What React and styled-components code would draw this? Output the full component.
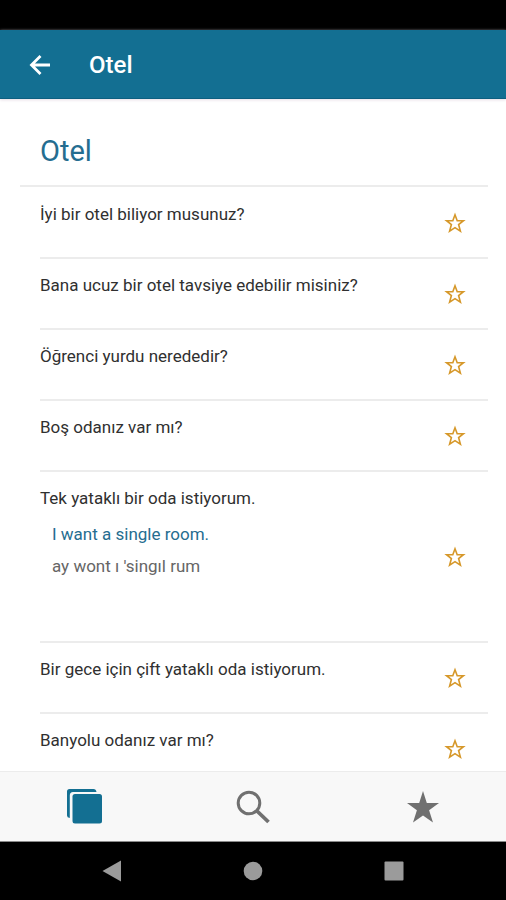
import React, { useState } from 'react';
import styled, { createGlobalStyle } from 'styled-components';

const GlobalStyle = createGlobalStyle`
  * {
    box-sizing: border-box;
  }

  body {
    margin: 0;
    font-family: Roboto, 'Noto Sans', sans-serif;
    background: #ffffff;
  }
`;

const Screen = styled.div`
  height: 100vh;
  display: flex;
  flex-direction: column;
`;

const StatusBar = styled.div`
  flex: none;
  height: 30px;
  background: #000000;
`;

const Header = styled.header`
  flex: none;
  height: 69px;
  padding: 2px 20px 0;
  display: flex;
  align-items: center;
  gap: 29px;
  color: #ffffff;
  background: #136f92;
  border-bottom: 1px solid #0d5f80;
  box-shadow: 0 1px 3px #e6dce4;
  z-index: 1;
`;

const IconButton = styled.button`
  flex: none;
  width: 40px;
  height: 40px;
  padding: 0;
  display: flex;
  align-items: center;
  justify-content: center;
  border: none;
  background: none;
  color: ${(props) => props.$color};
  cursor: pointer;
`;

const HeaderTitle = styled.h1`
  margin: 0;
  font-size: 24px;
  line-height: 32px;
  font-weight: 500;
`;

const Content = styled.main`
  flex: 1;
  min-height: 0;
  overflow: hidden;
  padding: 0 18px 0 20px;
`;

const SectionTitle = styled.h2`
  margin: 0;
  padding: 32px 20px 14px;
  font-size: 29px;
  line-height: 40px;
  font-weight: 400;
  color: #256d90;
  border-bottom: 2px solid #ececec;
`;

const List = styled.ul`
  margin: 0;
  padding: 1px 0 0 20px;
  list-style: none;
`;

const ListItem = styled.li`
  min-height: ${(props) => (props.$open ? '171px' : '71px')};
  padding-right: 13px;
  display: flex;
  align-items: center;
  justify-content: space-between;
  border-bottom: 2px solid #ececec;
`;

const Phrase = styled.div`
  align-self: flex-start;
  padding-top: 14px;
  font-size: 17px;
  line-height: 24px;
  color: #303030;
`;

const Detail = styled.div`
  padding: 8px 12px 0;
  line-height: 32px;
`;

const Translation = styled.div`
  color: #256d90;
`;

const Reading = styled.div`
  color: #666666;
`;

const TabBar = styled.nav`
  flex: none;
  height: 71px;
  display: grid;
  grid-template-columns: repeat(3, 1fr);
  place-items: center;
  background: #f8f8f8;
  border-top: 1px solid #ececec;
  border-bottom: 1px solid #8a8a8a;
`;

const SystemBar = styled.div`
  flex: none;
  height: 58px;
  padding: 0 92px;
  display: flex;
  align-items: center;
  justify-content: space-between;
  background: #000000;
`;

const BackArrow = () => (
  <svg width='22' height='22' viewBox='0 0 22 22' fill='none'>
    <path
      d='M11.5 2 L2.5 11 L11.5 20 M2.5 11 H21'
      stroke='currentColor'
      strokeWidth='2.8'
    />
  </svg>
);

const StarOutline = () => (
  <svg width='22' height='22' viewBox='0 0 22 22' fill='none'>
    <path
      d='M11 2.8 L13.2 8.7 H19.4 L14.6 12.5 L16.4 19.2 L11 15.6 L5.6 19.2 L7.4 12.5 L2.6 8.7 H8.8 Z'
      stroke='currentColor'
      strokeWidth='1.6'
    />
  </svg>
);

const StarFilled = () => (
  <svg width='36' height='34' viewBox='0 0 36 34'>
    <path
      d='M19 1 L22.8 13 H35 L25.1 20.2 L29 32.5 L19 25.6 L9 32.5 L12.9 20.2 L3 13 H15.2 Z'
      fill='currentColor'
    />
  </svg>
);

const Albums = () => (
  <svg width='38' height='36' viewBox='0 0 38 36' fill='currentColor'>
    <path d='M4.5 0 H28.5 Q31 0 31.5 3 H8 Q4.8 3 4.8 6.5 V29 Q2 28.5 2 26.5 V2.5 Q2 0 4.5 0 Z' />
    <rect x='7.5' y='5' width='29.5' height='29.5' rx='2.5' />
  </svg>
);

const Search = () => (
  <svg width='34' height='34' viewBox='0 0 34 34' fill='none' stroke='currentColor'>
    <circle cx='13' cy='13' r='10.8' strokeWidth='3' />
    <path d='M21 21 L32.5 32' strokeWidth='3.8' />
  </svg>
);

const phrases = [
  { text: 'İyi bir otel biliyor musunuz?' },
  { text: 'Bana ucuz bir otel tavsiye edebilir misiniz?' },
  { text: 'Öğrenci yurdu nerededir?' },
  { text: 'Boş odanız var mı?' },
  {
    text: 'Tek yataklı bir oda istiyorum.',
    translation: 'I want a single room.',
    reading: "ay wont ı 'singıl rum",
  },
  { text: 'Bir gece için çift yataklı oda istiyorum.' },
  { text: 'Banyolu odanız var mı?' },
];

const tabs = [
  { name: 'Kategoriler', icon: <Albums /> },
  { name: 'Ara', icon: <Search /> },
  { name: 'Favoriler', icon: <StarFilled /> },
];

const App = () => {
  const [tab, setTab] = useState('Kategoriler');
  return (
    <Screen>
      <GlobalStyle />
      <StatusBar />
      <Header>
        <IconButton $color='#ffffff' aria-label='Geri'>
          <BackArrow />
        </IconButton>
        <HeaderTitle>Otel</HeaderTitle>
      </Header>
      <Content>
        <SectionTitle>Otel</SectionTitle>
        <List>
          {phrases.map((item) => (
            <ListItem key={item.text} $open={Boolean(item.translation)}>
              <Phrase>
                {item.text}
                {item.translation && (
                  <Detail>
                    <Translation>{item.translation}</Translation>
                    <Reading>{item.reading}</Reading>
                  </Detail>
                )}
              </Phrase>
              <IconButton $color='#d6982a' aria-label='Favorilere ekle'>
                <StarOutline />
              </IconButton>
            </ListItem>
          ))}
        </List>
      </Content>
      <TabBar>
        {tabs.map((item) => (
          <IconButton
            key={item.name}
            $color={tab === item.name ? '#136f92' : '#707070'}
            aria-label={item.name}
            onClick={() => setTab(item.name)}
          >
            {item.icon}
          </IconButton>
        ))}
      </TabBar>
      <SystemBar>
        <IconButton $color='#9b9b9b' aria-label='Sistem geri'>
          <svg width='20' height='22' viewBox='0 0 20 22' fill='currentColor'>
            <path d='M0.5 11 L19 0.5 V21.5 Z' />
          </svg>
        </IconButton>
        <IconButton $color='#9b9b9b' aria-label='Ana ekran'>
          <svg width='20' height='20' viewBox='0 0 20 20' fill='currentColor'>
            <circle cx='10' cy='10' r='9.3' />
          </svg>
        </IconButton>
        <IconButton $color='#9b9b9b' aria-label='Son uygulamalar'>
          <svg width='20' height='20' viewBox='0 0 20 20' fill='currentColor'>
            <rect x='0.5' y='0.5' width='19' height='19' rx='1' />
          </svg>
        </IconButton>
      </SystemBar>
    </Screen>
  );
};

export default App;
